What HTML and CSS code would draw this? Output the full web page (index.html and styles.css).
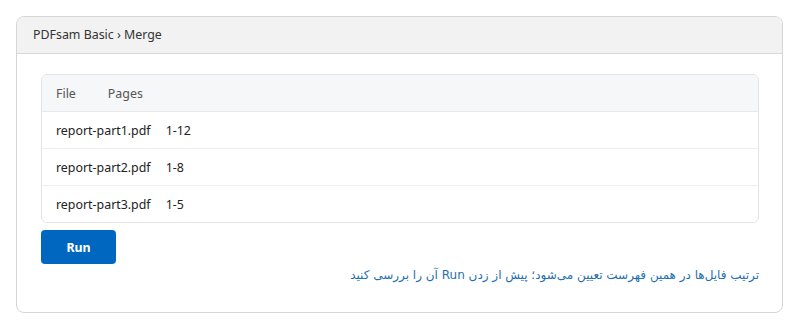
FILE: index.html
```html
<!DOCTYPE html>
<html lang="en">
<head>
    <meta charset="UTF-8">
    <title>PDFsam Basic - Merge</title>
    <link rel="stylesheet" href="styles.css">
</head>
<body>
<div class="window">
    <div class="titlebar">PDFsam Basic › Merge</div>
    <div class="content">
        <div class="file-list">
            <div class="row head">
                <span class="name">File</span>
                <span class="pages">Pages</span>
            </div>
            <div class="row">
                <span class="name">report-part1.pdf</span>
                <span class="pages">1-12</span>
            </div>
            <div class="row">
                <span class="name">report-part2.pdf</span>
                <span class="pages">1-8</span>
            </div>
            <div class="row">
                <span class="name">report-part3.pdf</span>
                <span class="pages">1-5</span>
            </div>
        </div>
        <button class="btn-run">Run</button>
        <p class="hint" dir="rtl" lang="fa">ترتیب فایل‌ها در همین فهرست تعیین می‌شود؛ پیش از زدن Run آن را بررسی کنید</p>
    </div>
</div>
</body>
</html>
```

FILE: styles.css
```css
body {
    margin: 0;
    padding: 16px;
    font-family: "Noto Sans", "Open Sans", Arial, sans-serif;
    font-size: 12.4px;
    color: #222;
    background: #fff;
}

.window {
    width: 767px;
    height: 297px;
    box-sizing: border-box;
    border: 1px solid #d6d6d6;
    border-radius: 8px;
    overflow: hidden;
}

.titlebar {
    height: 36px;
    line-height: 36px;
    padding: 0 16px;
    background-color: #f2f2f2;
    border-bottom: 1px solid #d8d8d8;
    color: #333;
}

.content {
    padding: 20px 23px 0 24px;
}

.file-list {
    border: 1px solid #e2e4e7;
    border-radius: 6px;
    overflow: hidden;
}

.row {
    display: flex;
    height: 36px;
    align-items: center;
    padding: 0 14px;
    border-top: 1px solid #eceef0;
}

.row:first-child {
    border-top: none;
}

.row.head {
    background-color: #f6f7f8;
    color: #555;
    border-bottom: 1px solid #e6e8ea;
}

.row.head + .row {
    border-top: none;
}

.row .name {
    margin-right: 15px;
}

.row.head .name {
    margin-right: 32px;
}

.btn-run {
    margin-top: 7px;
    width: 75px;
    height: 34px;
    border: none;
    border-radius: 4px;
    background-color: #0067c0;
    color: #fff;
    font-family: inherit;
    font-size: 12.4px;
    font-weight: bold;
    cursor: pointer;
}

.hint {
    margin: 4px 0 0;
    font-size: 12px;
    color: #1f6fb0;
    font-family: "DejaVu Sans", "Noto Sans", sans-serif;
}
```
